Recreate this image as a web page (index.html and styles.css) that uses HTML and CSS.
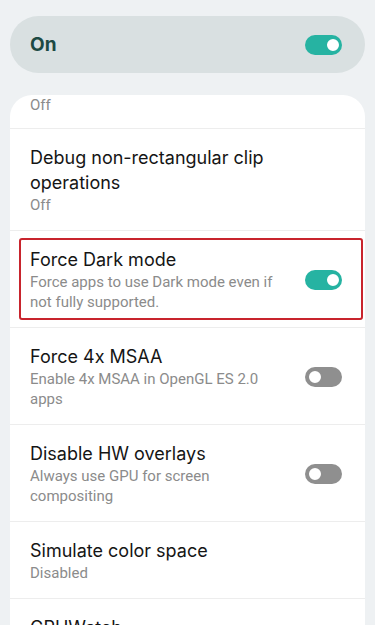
FILE: index.html
```html
<!DOCTYPE html>
<html lang="en">
<head>
    <meta charset="UTF-8">
    <meta name="viewport" content="width=device-width, initial-scale=1.0">
    <title>Developer options</title>
    <link rel="stylesheet" href="styles.css">
</head>
<body>
    <div class="master">
        <span class="master-label">On</span>
        <span class="switch on"></span>
    </div>

    <div class="card">
        <div class="row cut">
            <div class="text">
                <div class="sub">Off</div>
            </div>
        </div>

        <div class="row">
            <div class="text">
                <div class="title">Debug non-rectangular clip operations</div>
                <div class="sub">Off</div>
            </div>
        </div>

        <div class="row marked">
            <div class="text">
                <div class="title">Force Dark mode</div>
                <div class="sub">Force apps to use Dark mode even if not fully supported.</div>
            </div>
            <span class="switch on"></span>
            <div class="highlight"></div>
        </div>

        <div class="row">
            <div class="text">
                <div class="title">Force 4x MSAA</div>
                <div class="sub">Enable 4x MSAA in OpenGL ES 2.0 apps</div>
            </div>
            <span class="switch"></span>
        </div>

        <div class="row">
            <div class="text">
                <div class="title">Disable HW overlays</div>
                <div class="sub">Always use GPU for screen compositing</div>
            </div>
            <span class="switch"></span>
        </div>

        <div class="row">
            <div class="text">
                <div class="title">Simulate color space</div>
                <div class="sub">Disabled</div>
            </div>
        </div>

        <div class="row">
            <div class="text">
                <div class="title">GPUWatch</div>
                <div class="sub">Off</div>
            </div>
        </div>
    </div>
</body>
</html>
```

FILE: styles.css
```css
body {
    margin: 0;
    background-color: #eef1f3;
    font-family: Inter, Roboto, sans-serif;
    height: 625px;
    overflow: hidden;
}

.master {
    margin: 16px 10px 0;
    height: 57px;
    border-radius: 29px;
    background-color: #d9e0e1;
    padding: 0 23px 0 20px;
    display: flex;
    align-items: center;
    justify-content: space-between;
}

.master-label {
    font-size: 19px;
    font-weight: 700;
    color: #1d4a44;
}

.card {
    margin: 22px 10px 0;
    background-color: #fff;
    border-radius: 22px 22px 0 0;
    overflow: hidden;
}

.row {
    position: relative;
    display: flex;
    align-items: center;
    justify-content: space-between;
    gap: 16px;
    padding: 16px 23px 15px 20px;
    border-top: 1px solid #ededed;
}

.row:first-child {
    border-top: none;
}

.row.cut {
    padding-top: 0;
    padding-bottom: 13px;
}

.text {
    flex: 1;
    max-width: 262px;
}

.title {
    font-size: 18px;
    line-height: 25px;
    color: #151515;
}

.sub {
    font-family: Roboto, sans-serif;
    font-size: 15px;
    line-height: 20px;
    color: #8b8b8b;
}

.switch {
    position: relative;
    flex-shrink: 0;
    width: 37px;
    height: 20px;
    border-radius: 10px;
    background-color: #8f8f8f;
}

.switch::after {
    content: "";
    position: absolute;
    top: 2px;
    left: 2px;
    width: 12px;
    height: 12px;
    border-radius: 50%;
    background-color: #fff;
    border: 2px solid #8f8f8f;
}

.switch.on {
    background-color: #26b3a2;
}

.switch.on::after {
    left: auto;
    right: 1px;
    border-color: #26b3a2;
}

.highlight {
    position: absolute;
    left: 9px;
    right: 2px;
    top: 7px;
    height: 78px;
    border: 2px solid #c8242d;
    border-radius: 3px;
    pointer-events: none;
}
```
